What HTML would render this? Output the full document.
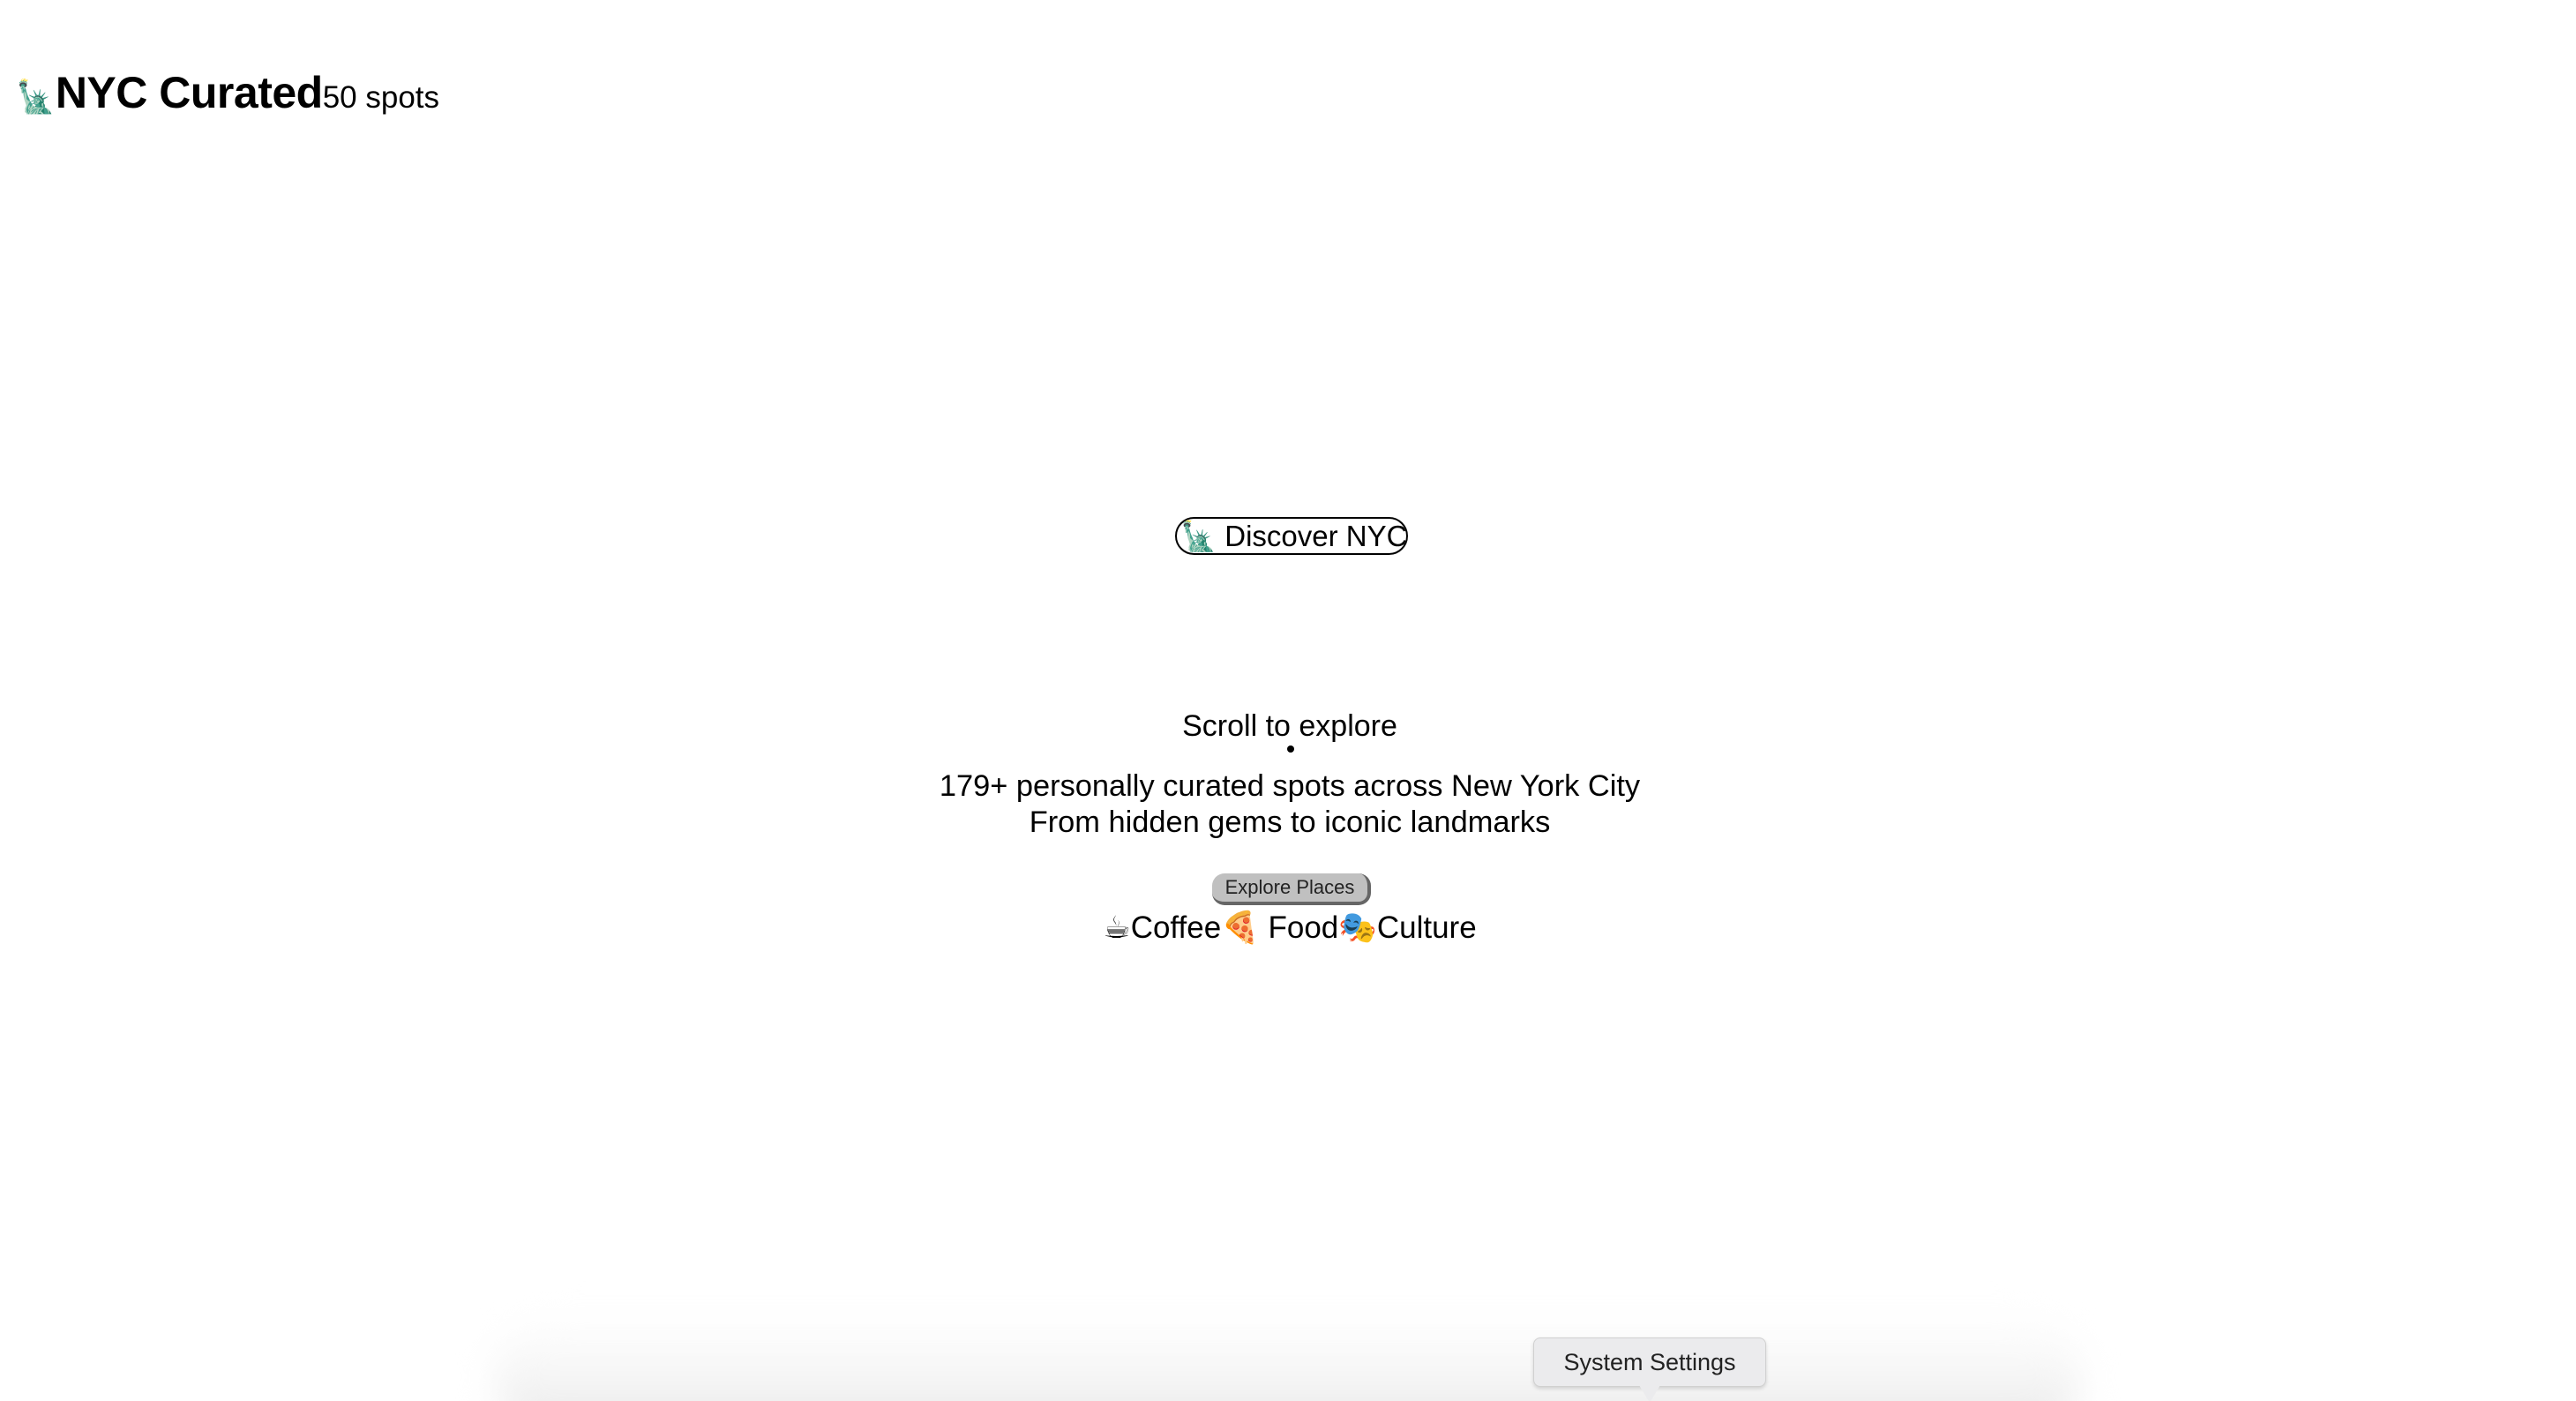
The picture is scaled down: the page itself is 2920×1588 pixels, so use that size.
<!DOCTYPE html>
<html><head><meta charset="utf-8"><style>
html,body{margin:0;padding:0;width:2920px;height:1588px;overflow:hidden;background:#fff;font-family:"Liberation Sans","DejaVu Sans",sans-serif;color:#000;position:relative}
.c{position:absolute;left:0;width:2924px;text-align:center;white-space:nowrap}
</style></head><body>
<div style="position:absolute;left:18px;top:76px;white-space:nowrap;display:flex;align-items:baseline">
<span style="font-size:36px">🗽</span><span style="font-size:50px;font-weight:bold;letter-spacing:-0.5px">NYC Curated</span><span style="font-size:35px">50 spots</span></div>

<div style="position:absolute;left:1332px;top:586px;width:256px;height:39px;border:2px solid #000;border-radius:22px;font-size:33px;line-height:39px;white-space:nowrap;overflow:hidden;padding-left:4px">🗽 Discover NYC</div>

<div class="c" style="top:803px;font-size:34px;line-height:40px">Scroll to explore</div>
<div style="position:absolute;left:1459px;top:845px;width:8px;height:8px;border-radius:50%;background:#000"></div>
<div class="c" style="top:871px;font-size:34.4px;line-height:41px">179+ personally curated spots across New York City<br>From hidden gems to iconic landmarks</div>

<div style="position:absolute;left:1374px;top:990px;width:176px;height:32px;background:#c0c0c0;border-radius:14px;border-right:4px solid #666;border-bottom:4px solid #666;font-size:22px;line-height:32px;text-align:center;color:#222">Explore Places</div>
<div class="c" style="top:1030px;font-size:35px;line-height:44px">☕Coffee🍕 Food🎭Culture</div>

<div style="position:absolute;left:560px;top:1490px;width:1800px;height:140px;border-radius:70px;background:linear-gradient(#fff 0%,#f6f6f6 50%,#e6e6e6 100%);filter:blur(20px)"></div>
<div style="position:absolute;left:1738px;top:1516px;width:262px;height:54px;background:#ebebed;border:1px solid #d0d0d0;border-radius:8px;box-shadow:0 2px 4px rgba(0,0,0,0.15);font-size:27px;line-height:54px;text-align:center;color:#222">System Settings</div>
<div style="position:absolute;left:1858px;top:1570px;width:0;height:0;border-left:12px solid transparent;border-right:12px solid transparent;border-top:20px solid #ebebed"></div>
</body></html>
